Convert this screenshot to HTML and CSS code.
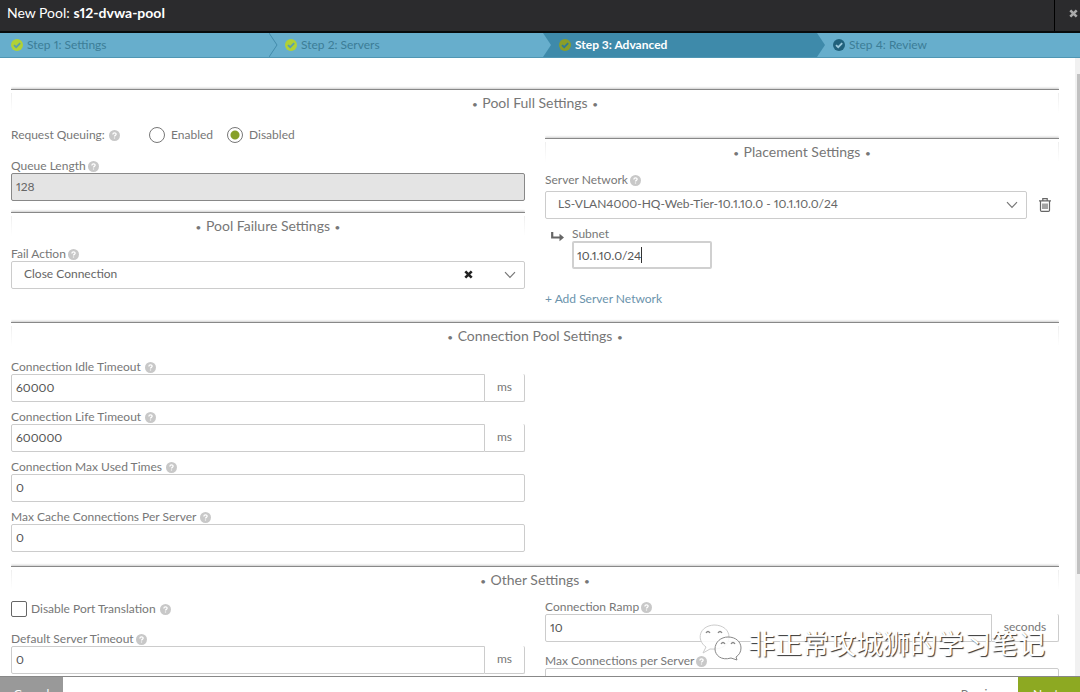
FILE: index.html
```html
<!DOCTYPE html>
<html lang="en">
<head>
<meta charset="utf-8">
<title>New Pool: s12-dvwa-pool</title>
<link rel="stylesheet" href="styles.css">
</head>
<body>
<svg class="sprite" aria-hidden="true">
  <symbol id="help" viewBox="0 0 12 12"><circle cx="6" cy="6" r="6" fill="#c8c8c8"/><path d="M4.2 4.8C4.2 2.5 7.9 2.6 7.8 4.7C7.7 5.9 6.1 5.8 6 7.1M6 8.2V9.4" fill="none" stroke="#fff" stroke-width="1.4"/></symbol>
  <symbol id="check" viewBox="0 0 12 12"><circle cx="6" cy="6" r="6" fill="currentColor"/><path d="M3 6.1L5.2 8.2L9.2 4.1" fill="none" stroke="var(--tick)" stroke-width="1.8"/></symbol>
  <symbol id="down" viewBox="0 0 12 8"><path d="M1 1.2L6 6.4L11 1.2" fill="none" stroke="#777" stroke-width="1.2"/></symbol>
  <symbol id="cross" viewBox="0 0 9 9"><path d="M1.3 1.3L7.7 7.7M7.7 1.3L1.3 7.7" fill="none" stroke="currentColor" stroke-width="2.6"/></symbol>
</svg>
<div class="dialog">
  <header class="titlebar">
    <h1 class="title">New Pool: <b>s12-dvwa-pool</b></h1>
    <button class="close" type="button" aria-label="Close"><svg class="cross"><use href="#cross"/></svg></button>
  </header>
  <div class="steps-clip">
    <ol class="steps">
      <li class="step done"><svg class="check"><use href="#check"/></svg>Step 1: Settings<svg class="arrow" viewBox="0 0 9 24"><path d="M0 0L8 12L0 24" fill="#67aecc" stroke="#438bab"/></svg></li>
      <li class="step done"><svg class="check"><use href="#check"/></svg>Step 2: Servers<svg class="arrow" viewBox="0 0 9 24"><path d="M0 0L8 12L0 24" fill="#67aecc"/></svg></li>
      <li class="step active"><svg class="check"><use href="#check"/></svg>Step 3: Advanced<svg class="arrow" viewBox="0 0 9 24"><path d="M0 0L8 12L0 24" fill="#3e8aaa"/></svg></li>
      <li class="step next"><svg class="check"><use href="#check"/></svg>Step 4: Review</li>
    </ol>
  </div>
  <div class="viewport">
    <main class="content">
      <section>
        <h2 class="heading"><span class="dot">•</span> Pool Full Settings <span class="dot">•</span></h2>
        <div class="columns">
          <div>
            <div class="radios" role="radiogroup" aria-label="Request Queuing">
              <span class="radios-label">Request Queuing: <svg class="help"><use href="#help"/></svg></span>
              <label class="choice"><input class="radio" type="radio" name="queuing">Enabled</label>
              <label class="choice"><input class="radio" type="radio" name="queuing" checked>Disabled</label>
            </div>
            <div class="field queue">
              <label class="label" for="queue">Queue Length<svg class="help"><use href="#help"/></svg></label>
              <input class="input" id="queue" value="128" disabled>
            </div>
            <h2 class="heading failure"><span class="dot">•</span> Pool Failure Settings <span class="dot">•</span></h2>
            <div class="field after-heading">
              <label class="label" for="fail">Fail Action<svg class="help"><use href="#help"/></svg></label>
              <div class="select-wrap">
                <select class="input select" id="fail"><option>Close Connection</option></select>
                <button class="clear" type="button" aria-label="Clear"><svg class="cross"><use href="#cross"/></svg></button>
                <svg class="down"><use href="#down"/></svg>
              </div>
            </div>
          </div>
          <div>
            <h2 class="heading placement"><span class="dot">•</span> Placement Settings <span class="dot">•</span></h2>
            <div class="field network after-heading">
              <label class="label" for="network">Server Network<svg class="help"><use href="#help"/></svg></label>
              <div class="network-row">
                <div class="select-wrap">
                  <select class="input select" id="network"><option>LS-VLAN4000-HQ-Web-Tier-10.1.10.0 - 10.1.10.0/24</option></select>
                  <svg class="down"><use href="#down"/></svg>
                </div>
                <button class="trash" type="button" aria-label="Delete"><svg viewBox="0 0 12 14"><path d="M0 2.8H12M3.8 2.5V.7H8.2V2.5M1.5 3V12.2Q1.5 13.3 2.6 13.3H9.4Q10.5 13.3 10.5 12.2V3M4 5.5V11M6 5.5V11M8 5.5V11" fill="none" stroke="#666" stroke-width="1.2"/></svg></button>
              </div>
            </div>
            <div class="subnet">
              <svg class="sub-arrow" viewBox="0 0 14 10"><path d="M1.2 0V5.5H10" fill="none" stroke="#666" stroke-width="2.2"/><path d="M8.5 1.8L13 5.5L8.5 9.2Z" fill="#666"/></svg>
              <div class="field">
                <label class="label" for="subnet">Subnet</label>
                <div class="editing"><input class="input" id="subnet" value="10.1.10.0/24"><span class="caret"></span></div>
              </div>
            </div>
            <a class="add" href="#">+ Add Server Network</a>
          </div>
        </div>
      </section>
      <section class="connection">
        <h2 class="heading"><span class="dot">•</span> Connection Pool Settings <span class="dot">•</span></h2>
        <div class="columns">
          <div class="stack">
            <div class="field">
              <label class="label spaced" for="idle">Connection Idle Timeout<svg class="help"><use href="#help"/></svg></label>
              <div class="group"><input class="input" id="idle" value="60000"><span class="unit">ms</span></div>
            </div>
            <div class="field">
              <label class="label spaced" for="life">Connection Life Timeout<svg class="help"><use href="#help"/></svg></label>
              <div class="group"><input class="input" id="life" value="600000"><span class="unit">ms</span></div>
            </div>
            <div class="field">
              <label class="label spaced" for="used">Connection Max Used Times<svg class="help"><use href="#help"/></svg></label>
              <input class="input" id="used" value="0">
            </div>
            <div class="field">
              <label class="label spaced" for="cache">Max Cache Connections Per Server<svg class="help"><use href="#help"/></svg></label>
              <input class="input" id="cache" value="0">
            </div>
          </div>
        </div>
      </section>
      <section class="other">
        <h2 class="heading"><span class="dot">•</span> Other Settings <span class="dot">•</span></h2>
        <div class="columns">
          <div>
            <label class="check-row"><input class="checkbox" type="checkbox">Disable Port Translation<svg class="help"><use href="#help"/></svg></label>
            <div class="field timeout">
              <label class="label" for="timeout">Default Server Timeout<svg class="help"><use href="#help"/></svg></label>
              <div class="group"><input class="input" id="timeout" value="0"><span class="unit">ms</span></div>
            </div>
          </div>
          <div class="limits">
            <div class="field">
              <label class="label" for="ramp">Connection Ramp<svg class="help"><use href="#help"/></svg></label>
              <div class="group"><input class="input" id="ramp" value="10"><span class="unit wide">seconds</span></div>
            </div>
            <div class="field">
              <label class="label" for="max">Max Connections per Server<svg class="help"><use href="#help"/></svg></label>
              <input class="input" id="max">
            </div>
          </div>
        </div>
      </section>
    </main>
    <div class="rail"><div class="thumb"></div></div>
  </div>
  <footer class="footer">
    <button class="btn cancel" type="button">Cancel</button>
    <button class="btn previous" type="button">‹ Previous</button>
    <button class="btn forward" type="button">Next ›</button>
  </footer>
</div>
<div class="watermark">
  <svg viewBox="0 0 44 38"><g fill="#fff" fill-opacity=".85" stroke-linejoin="round"><path d="M5 29L8 23C-2 16 1 2 16 1C25 1 31 6 31 13C31 21 24 26 12 25Z" stroke="#ccc"/><path d="M39 36L33 34C23 37 17 31 17 25C17 18 23 13 30 13C38 13 43 18 43 24C43 28 41 31 38 33Z" stroke="#888"/></g><path d="M8 9Q10 6 12 9M20 9Q22 6 24 9M23 20Q25 17 27 20M33 20Q35 17 37 20" fill="none" stroke="#888" stroke-width="1.3"/></svg>
  <span>非正常攻城狮的学习笔记</span>
</div>
</body>
</html>
```

FILE: styles.css
```css
* { box-sizing: border-box; }
html { overflow: hidden; }
body { margin: 0; overflow: hidden; height: 100vh; background: #fff; color: #777; font: 12px/14px Lato, "Open Sans", sans-serif; font-variant-numeric: proportional-nums; }
button, input, select { font: inherit; font-variant-numeric: proportional-nums; color: inherit; margin: 0; }
button { border: 0; padding: 0; background: none; cursor: pointer; }
svg { display: block; flex: none; }
.sprite { position: absolute; width: 0; height: 0; }

/* The footer runs 18px below the window edge. */
.dialog { display: flex; flex-direction: column; height: calc(100vh + 18px); }

.titlebar { display: flex; flex: none; height: 33px; background: #2b2b2d; border-bottom: 2px solid #080b0c; color: #fff; }
.title { flex: 1; margin: 0; padding: 3px 7px; font-size: 14px; line-height: 20px; font-weight: 400; }
.close { width: 26px; padding: 0 0 4px 14px; border-left: 1px solid #000; color: #aaa; }
.cross { width: 9px; height: 9px; }

.steps-clip { flex: none; overflow: hidden; background: #67aecc; border-bottom: 1px solid #4f96b3; }
.steps { display: grid; grid-template-columns: repeat(4, 1fr); width: calc(100% + 16px); margin: 0 0 0 -5px; padding: 0; list-style: none; }
.step { position: relative; display: flex; align-items: center; gap: 4px; height: 24px; padding-left: 16px; color: #3c7d97; }
.step.active { background: #3e8aaa; color: #fff; font-weight: 700; }
.arrow { position: absolute; z-index: 1; left: 100%; top: 0; width: 9px; height: 24px; }
.check { width: 12px; height: 12px; }
.done .check { color: #b0d136; --tick: #5a9eb0; }
.active .check { color: #8a9e29; --tick: #2f7a96; }
.next .check { color: #20617c; --tick: #9cc9dc; }

.viewport { display: flex; flex: 1; min-height: 0; overflow: hidden; }
.content { flex: 1; padding: 31px 16px 0 11px; overflow: hidden; }
.rail { width: 5px; padding: 16px 0 0 2px; background: #f1f1f1; }
.thumb { height: 500px; background: #c1c1c1; }

.heading { margin: 0; height: 26px; border-top: 1px solid #888; box-shadow: 0 -1px 2px #ccc; clip-path: inset(-4px 0 0); font-size: 14px; line-height: 26px; font-weight: 400; text-align: center; color: #777; background: linear-gradient(#eee, #fff) left / 1px 20px no-repeat, linear-gradient(#eee, #fff) right / 1px 20px no-repeat; }
.dot { font-size: 10px; margin: 0 1px; }
.columns { display: grid; grid-template-columns: 1fr 1fr; gap: 20px; }
.columns > div { min-width: 0; }
.label { display: flex; align-items: center; gap: 2px; line-height: 14px; }
.label.spaced { gap: 4px; }
.help { width: 11px; height: 11px; }
.input { display: block; width: 100%; height: 28px; padding: 0 4px 2px; border: 1px solid #ccc; border-radius: 2px; background: #fff; color: #555; outline: none; }
.input:disabled { background: #e4e4e4; border-color: #888; color: #666; }
.select { appearance: none; padding: 0 40px 2px 12px; color: #666; }
.select-wrap { position: relative; flex: 1; }
.down { position: absolute; right: 9px; top: 10px; width: 12px; height: 8px; pointer-events: none; }
.clear { position: absolute; right: 52px; top: 9px; color: #222; }
.group { display: flex; }
.group .input { flex: 1; min-width: 0; border-radius: 2px 0 0 2px; }
.unit { width: 40px; border: solid #ccc; border-width: 0 1px 1px 0; border-radius: 0 2px 2px 0; line-height: 26px; text-align: center; }
.unit.wide { width: 67px; }

.radios { display: flex; align-items: center; height: 20px; margin: 10px 0 14px; }
.radios-label { display: flex; align-items: center; gap: 4px; width: 138px; }
.choice { display: flex; align-items: center; gap: 6px; margin-right: 14px; }
.radio { appearance: none; width: 16px; height: 16px; border: 1px solid #777; border-radius: 50%; }
.radio:checked { background: radial-gradient(circle, #87a02a 4px, #fff 5px); }
.failure { margin-top: 11px; }
.after-heading { margin-top: 9px; }
.placement { margin-top: 23px; }
.network-row { display: flex; align-items: center; margin-top: 4px; }
.trash { width: 32px; padding: 0 8px 0 12px; }
.trash svg { width: 12px; height: 14px; }
.subnet { display: flex; margin: 8px 0 22px 6px; gap: 7px; }
.subnet .field { width: 140px; }
.subnet .input { border: 2px solid #d0d0d0; padding: 0 3px; }
.editing { position: relative; }
.caret { position: absolute; left: 69px; top: 6px; width: 1px; height: 16px; background: #333; }
.sub-arrow { width: 14px; height: 10px; margin-top: 5px; }
.add { display: inline-block; line-height: 16px; color: #6b93ac; text-decoration: none; }

.connection { margin-top: 15px; }
.stack { display: grid; gap: 8px; margin-top: 12px; }
.other { margin-top: 14px; }
.check-row { display: flex; align-items: center; gap: 4px; height: 18px; margin: 8px 0 14px; }
.checkbox { appearance: none; width: 16px; height: 16px; border: 1px solid #666; border-radius: 2px; background: #fff; }
.limits { display: grid; align-content: start; gap: 12px; margin-top: 8px; }

.footer { display: flex; flex: none; height: 34px; border-top: 1px solid #888; background: #fff; }
.btn { padding: 0 12px; }
.cancel { width: 63px; margin-right: auto; background: #999; color: #fff; }
.previous { padding-right: 12px; }
.forward { width: 62px; background: #8da922; color: #fff; }

.watermark { position: absolute; z-index: 2; right: 35px; bottom: 29px; display: flex; align-items: center; gap: 6px; color: #fff; font: 27px/40px "Noto Sans CJK SC", sans-serif; text-shadow: 1px 1px 1px #333; pointer-events: none; }
.watermark svg { width: 44px; height: 38px; }
```
